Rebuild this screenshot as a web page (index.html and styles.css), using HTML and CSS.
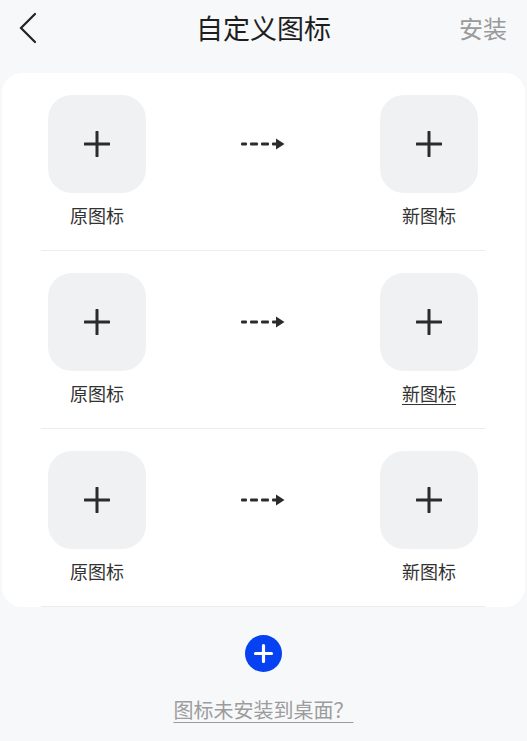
FILE: index.html
```html
<!DOCTYPE html>
<html lang="zh">
<head>
<meta charset="utf-8">
<link rel="stylesheet" href="styles.css">
</head>
<body>
<header class="bar">
  <svg class="back" width="18" height="32" viewBox="0 0 18 32"><polyline points="16,2 2,16 16,30" fill="none" stroke="#222" stroke-width="2.2" stroke-linecap="round" stroke-linejoin="miter"/></svg>
  <div class="title">自定义图标</div>
  <div class="install">安装</div>
</header>
<main class="card">
  <div class="row">
    <div class="col">
      <div class="tile"><svg width="26" height="26" viewBox="0 0 26 26"><path d="M13 1V25M1 13H25" stroke="#2b2b2b" stroke-width="3" stroke-linecap="round"/></svg></div>
      <div class="label">原图标</div>
    </div>
    <svg class="arrow" width="44" height="12" viewBox="0 0 44 12"><rect x="0" y="4.5" width="6" height="3" rx="1" fill="#2b2b2b"/><rect x="9" y="4.5" width="8" height="3" rx="1" fill="#2b2b2b"/><rect x="20" y="4.5" width="8" height="3" rx="1" fill="#2b2b2b"/><rect x="31" y="4.5" width="5" height="3" rx="1" fill="#2b2b2b"/><polygon points="35,0.5 43.5,6 35,11.5" fill="#2b2b2b"/></svg>
    <div class="col">
      <div class="tile"><svg width="26" height="26" viewBox="0 0 26 26"><path d="M13 1V25M1 13H25" stroke="#2b2b2b" stroke-width="3" stroke-linecap="round"/></svg></div>
      <div class="label">新图标</div>
    </div>
  </div>
  <div class="row">
    <div class="col">
      <div class="tile"><svg width="26" height="26" viewBox="0 0 26 26"><path d="M13 1V25M1 13H25" stroke="#2b2b2b" stroke-width="3" stroke-linecap="round"/></svg></div>
      <div class="label">原图标</div>
    </div>
    <svg class="arrow" width="44" height="12" viewBox="0 0 44 12"><rect x="0" y="4.5" width="6" height="3" rx="1" fill="#2b2b2b"/><rect x="9" y="4.5" width="8" height="3" rx="1" fill="#2b2b2b"/><rect x="20" y="4.5" width="8" height="3" rx="1" fill="#2b2b2b"/><rect x="31" y="4.5" width="5" height="3" rx="1" fill="#2b2b2b"/><polygon points="35,0.5 43.5,6 35,11.5" fill="#2b2b2b"/></svg>
    <div class="col">
      <div class="tile"><svg width="26" height="26" viewBox="0 0 26 26"><path d="M13 1V25M1 13H25" stroke="#2b2b2b" stroke-width="3" stroke-linecap="round"/></svg></div>
      <div class="label underline">新图标</div>
    </div>
  </div>
  <div class="row">
    <div class="col">
      <div class="tile"><svg width="26" height="26" viewBox="0 0 26 26"><path d="M13 1V25M1 13H25" stroke="#2b2b2b" stroke-width="3" stroke-linecap="round"/></svg></div>
      <div class="label">原图标</div>
    </div>
    <svg class="arrow" width="44" height="12" viewBox="0 0 44 12"><rect x="0" y="4.5" width="6" height="3" rx="1" fill="#2b2b2b"/><rect x="9" y="4.5" width="8" height="3" rx="1" fill="#2b2b2b"/><rect x="20" y="4.5" width="8" height="3" rx="1" fill="#2b2b2b"/><rect x="31" y="4.5" width="5" height="3" rx="1" fill="#2b2b2b"/><polygon points="35,0.5 43.5,6 35,11.5" fill="#2b2b2b"/></svg>
    <div class="col">
      <div class="tile"><svg width="26" height="26" viewBox="0 0 26 26"><path d="M13 1V25M1 13H25" stroke="#2b2b2b" stroke-width="3" stroke-linecap="round"/></svg></div>
      <div class="label">新图标</div>
    </div>
  </div>
</main>
<div class="add">
  <svg width="37" height="37" viewBox="0 0 37 37"><circle cx="18.5" cy="18.5" r="18.5" fill="#0641f2"/><path d="M18.5 10.5V26.5M10.5 18.5H26.5" stroke="#fff" stroke-width="3.2" stroke-linecap="round"/></svg>
</div>
<div class="help"><span>图标未安装到桌面？</span></div>
</body>
</html>
```
FILE: styles.css
```css
* { box-sizing: border-box; }
html, body {
  margin: 0;
  padding: 0;
  background: #f7f8fa;
  font-family: "Noto Sans CJK SC", "Noto Sans", sans-serif;
  color: #222;
}
.bar {
  position: relative;
  height: 73px;
  display: flex;
  align-items: flex-start;
  justify-content: center;
}
.back {
  position: absolute;
  left: 19px;
  top: 12px;
}
.title {
  margin-top: 8px;
  font-size: 27px;
  line-height: 40px;
  color: #1e1e1e;
  letter-spacing: 0;
}
.install {
  position: absolute;
  right: 20px;
  top: 10px;
  font-size: 24px;
  line-height: 36px;
  color: #9a9a9a;
}
.card {
  margin: 0 2px;
  background: #fff;
  border-radius: 20px;
  padding: 0 40px 0 39px;
  overflow: hidden;
}
.row {
  display: flex;
  justify-content: space-between;
  align-items: flex-start;
  padding: 22px 7px 23px;
  border-bottom: 1px solid #ececec;
}
.col {
  display: flex;
  flex-direction: column;
  align-items: center;
  width: 98px;
}
.tile {
  width: 98px;
  height: 98px;
  border-radius: 24px;
  background: #f0f1f3;
  display: flex;
  align-items: center;
  justify-content: center;
}
.label {
  margin-top: 10px;
  font-size: 18px;
  line-height: 24px;
  color: #333;
}
.underline {
  text-decoration: underline;
  text-underline-offset: 3px;
}
.arrow {
  margin-top: 43px;
}
.add {
  display: flex;
  justify-content: center;
  margin-top: 28px;
}
.help {
  display: flex;
  justify-content: center;
  margin-top: 25px;
  font-size: 20px;
  line-height: 26px;
  color: #9c9c9c;
}
.help span {
  text-decoration: underline;
  text-underline-offset: 4px;
  text-decoration-thickness: 1px;
}
```
